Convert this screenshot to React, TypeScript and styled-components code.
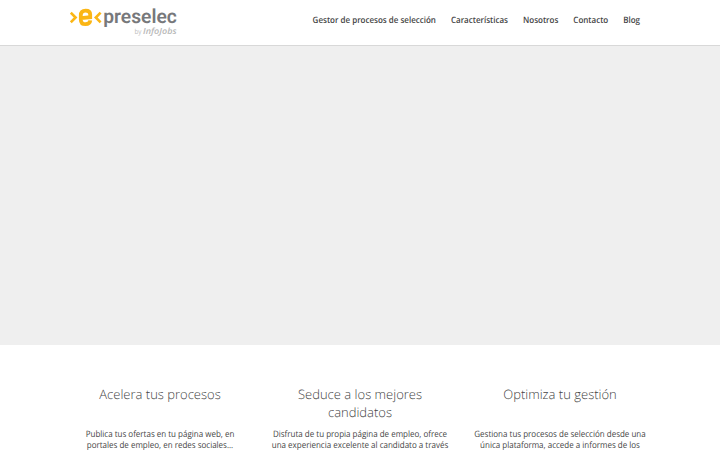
import React from "react";
import styled, { createGlobalStyle } from "styled-components";

interface Feature {
  title: string[];
  lines: string[];
}

const menuItems: string[] = [
  "Gestor de procesos de selección",
  "Características",
  "Nosotros",
  "Contacto",
  "Blog",
];

const features: Feature[] = [
  {
    title: ["Acelera tus procesos"],
    lines: [
      "Publica tus ofertas en tu página web, en",
      "portales de empleo, en redes sociales...",
    ],
  },
  {
    title: ["Seduce a los mejores", "candidatos"],
    lines: [
      "Disfruta de tu propia página de empleo, ofrece",
      "una experiencia excelente al candidato a través",
    ],
  },
  {
    title: ["Optimiza tu gestión"],
    lines: [
      "Gestiona tus procesos de selección desde una",
      "única plataforma, accede a informes de los",
    ],
  },
];

const Logo: React.FC = () => (
  <LogoSvg viewBox="0 0 110 32" role="img" aria-label="epreselec by InfoJobs">
    <path d="M0.8 7.6L5.6 12.5L0.8 17.4" fill="none" stroke="#fbb615" strokeWidth="2.6" />
    <path d="M30.6 7.6L25.8 12.5L30.6 17.4" fill="none" stroke="#fbb615" strokeWidth="2.6" />
    <path
      d="M20.3 15.4C20 18 18.2 19.2 15.6 19.2C12.4 19.2 10.8 17.4 10.8 14.4V10.4C10.8 7.4 12.5 5.6 15.6 5.6C18.6 5.6 20.2 7.2 20.2 9.6V12.2L11 13.2"
      fill="none"
      stroke="#fbb615"
      strokeWidth="3.8"
    />
    <LogoName x="33.3" y="18" textLength="73.5" lengthAdjust="spacingAndGlyphs">
      preselec
    </LogoName>
    <LogoBy x="64.5" y="29" textLength="7" lengthAdjust="spacingAndGlyphs">
      by
    </LogoBy>
    <LogoBrand x="73" y="29" textLength="33.5" lengthAdjust="spacingAndGlyphs">
      InfoJobs
    </LogoBrand>
  </LogoSvg>
);

const App: React.FC = () => {
  return (
    <>
      <GlobalStyle />
      <Header>
        <Logo />
        <Menu>
          {menuItems.map((item) => (
            <MenuLink key={item} href="#">
              {item}
            </MenuLink>
          ))}
        </Menu>
      </Header>
      <Hero />
      <Features>
        {features.map((feature) => (
          <FeatureColumn key={feature.lines[0]}>
            <FeatureTitle>
              {feature.title.map((line) => (
                <Line key={line}>{line}</Line>
              ))}
            </FeatureTitle>
            <FeatureText>
              {feature.lines.map((line) => (
                <TextLine key={line}>{line}</TextLine>
              ))}
            </FeatureText>
          </FeatureColumn>
        ))}
      </Features>
    </>
  );
};

// Styled-components

const GlobalStyle = createGlobalStyle`
  * {
    box-sizing: border-box;
  }

  body {
    margin: 0;
    overflow: hidden;
    background-color: #fff;
    color: #444;
    font-family: "Open Sans", "Noto Sans", sans-serif;
    text-rendering: geometricPrecision;
  }
`;

const Header = styled.header`
  display: flex;
  justify-content: space-between;
  height: 46px;
  padding: 0 80px 0 70px;
  border-bottom: 1px solid #d8d8d8;
`;

const LogoSvg = styled.svg`
  width: 110px;
  height: 32px;
  margin-top: 5px;
`;

const LogoName = styled.text`
  font-family: Roboto, sans-serif;
  font-size: 19.5px;
  font-weight: 600;
  fill: #77787b;
`;

const LogoBy = styled.text`
  font-family: "Open Sans", sans-serif;
  font-size: 7px;
  fill: #bbb;
`;

const LogoBrand = styled.text`
  font-family: "Open Sans", sans-serif;
  font-size: 8.5px;
  font-style: italic;
  font-weight: 600;
  fill: #b8b8b8;
`;

const Menu = styled.nav`
  display: flex;
  gap: 15px;
  padding-top: 14px;
`;

const MenuLink = styled.a`
  height: 12px;
  color: #444;
  font-size: 8px;
  font-weight: 600;
  line-height: 12px;
  text-decoration: none;
  white-space: nowrap;
  transform: translateY(0.5px) scaleY(1.1);
`;

const Hero = styled.section`
  height: 299px;
  background-color: #efefef;
`;

const Features = styled.section`
  display: grid;
  grid-template-columns: repeat(3, 200px);
  justify-content: center;
  padding-top: 40px;
`;

const FeatureColumn = styled.article`
  text-align: center;
`;

const FeatureTitle = styled.h2`
  height: 36px;
  margin: 0 0 7px;
  color: #444;
  font-size: 13px;
  font-weight: 300;
  line-height: 18px;
`;

const FeatureText = styled.p`
  margin: 0;
  font-size: 8px;
  line-height: 11px;
`;

const Line = styled.span`
  display: block;
  white-space: nowrap;
`;

const TextLine = styled(Line)`
  transform: translateY(0.5px) scaleY(1.1);
`;

export default App;
